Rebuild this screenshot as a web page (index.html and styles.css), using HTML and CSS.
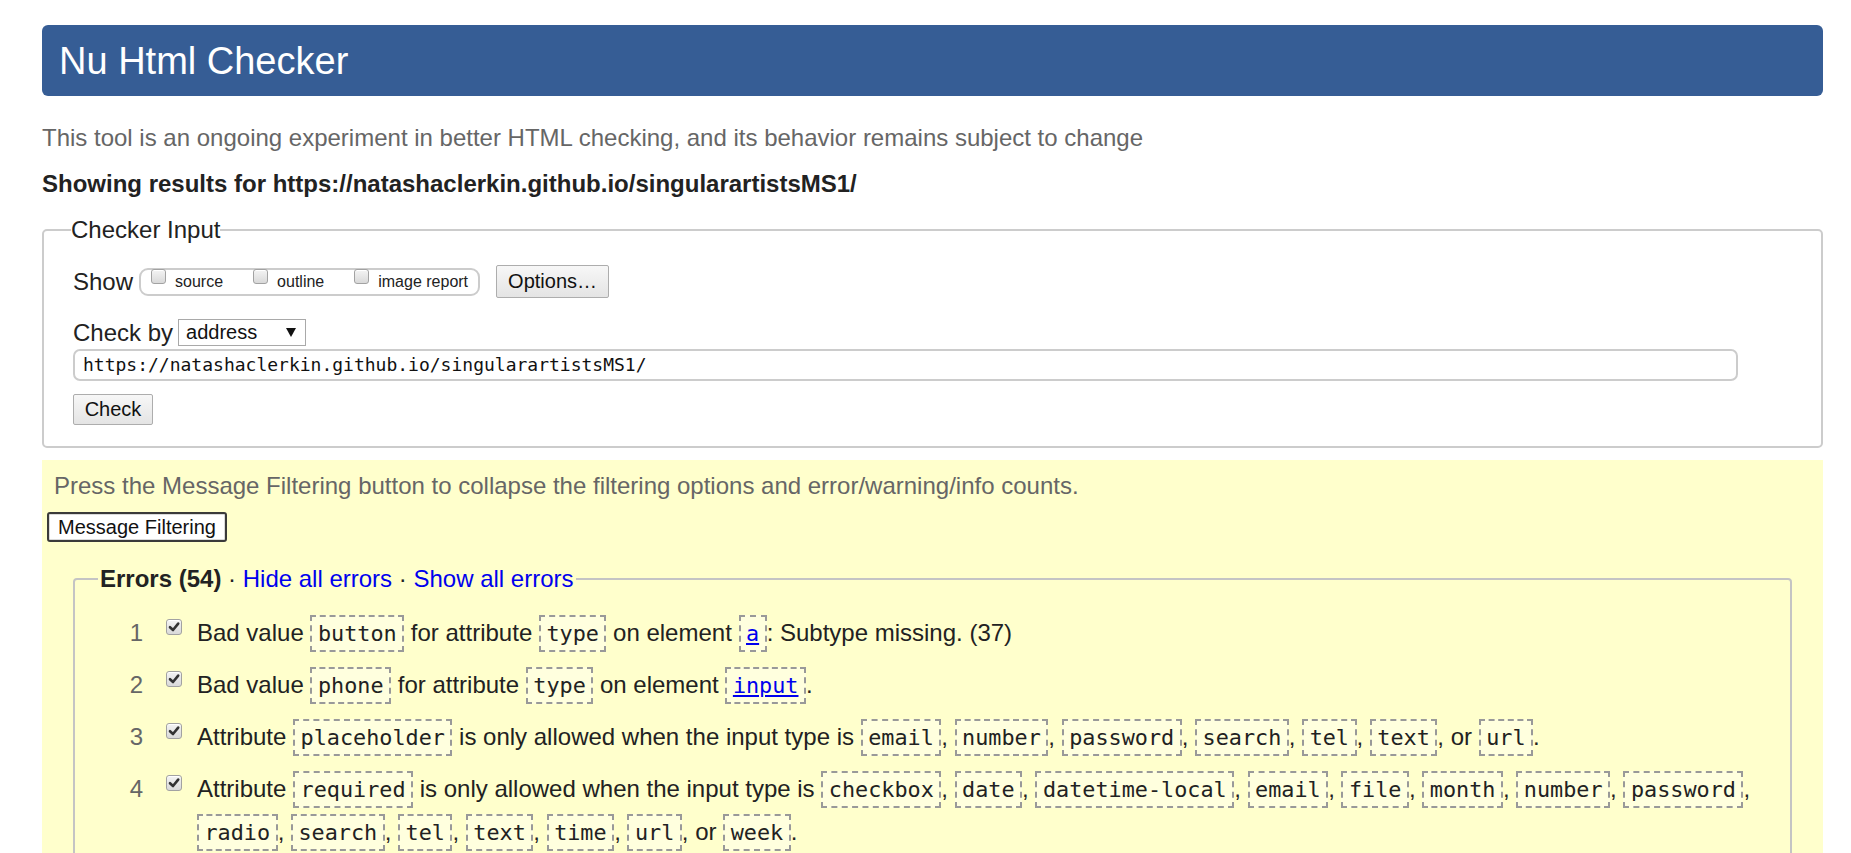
FILE: index.html
```html
<!DOCTYPE html>
<html lang="en">
<head>
<meta charset="utf-8">
<title>Nu Html Checker</title>
<link rel="stylesheet" href="styles.css">
</head>
<body>
<div class="page">
  <header class="banner"><h1>Nu Html Checker</h1></header>
  <p class="tagline">This tool is an ongoing experiment in better HTML checking, and its behavior remains subject to change</p>
  <p class="showing">Showing results for https://natashaclerkin.github.io/singularartistsMS1/</p>

  <fieldset class="checker">
    <legend>Checker Input</legend>
    <div class="show-row">
      <span class="lbl">Show</span>
      <span class="pill">
        <span class="opt"><span class="cb"></span><span class="optlbl">source</span></span>
        <span class="opt"><span class="cb"></span><span class="optlbl">outline</span></span>
        <span class="opt"><span class="cb"></span><span class="optlbl">image report</span></span>
      </span>
      <button class="btn options">Options…</button>
    </div>
    <div class="by-row">
      <span class="lbl">Check by</span>
      <span class="select">address<svg class="arrow" viewBox="0 0 10 9" width="10" height="9"><polygon points="0,0 10,0 5,9" fill="#111"/></svg></span>
    </div>
    <div class="url">https://natashaclerkin.github.io/singularartistsMS1/</div>
    <button class="btn check">Check</button>
  </fieldset>

  <section class="results">
    <p class="press">Press the Message Filtering button to collapse the filtering options and error/warning/info counts.</p>
    <button class="mf">Message Filtering</button>
    <fieldset class="errors">
      <legend><strong>Errors (54)</strong> · <a class="lnk">Hide all errors</a> · <a class="lnk">Show all errors</a></legend>
      <ol class="msgs">
        <li>
          <span class="num">1</span>
          <span class="cbcell"><span class="cb on"><svg viewBox="0 0 16 16" width="16" height="16"><path d="M4 8.2 L7 11 L12.2 4.6" fill="none" stroke="#333" stroke-width="2.6" stroke-linecap="round" stroke-linejoin="round"/></svg></span></span>
          <p>Bad value <code>button</code> for attribute <code>type</code> on element <code><a class="cl">a</a></code>: Subtype missing. (37)</p>
        </li>
        <li>
          <span class="num">2</span>
          <span class="cbcell"><span class="cb on"><svg viewBox="0 0 16 16" width="16" height="16"><path d="M4 8.2 L7 11 L12.2 4.6" fill="none" stroke="#333" stroke-width="2.6" stroke-linecap="round" stroke-linejoin="round"/></svg></span></span>
          <p>Bad value <code>phone</code> for attribute <code>type</code> on element <code><a class="cl">input</a></code>.</p>
        </li>
        <li>
          <span class="num">3</span>
          <span class="cbcell"><span class="cb on"><svg viewBox="0 0 16 16" width="16" height="16"><path d="M4 8.2 L7 11 L12.2 4.6" fill="none" stroke="#333" stroke-width="2.6" stroke-linecap="round" stroke-linejoin="round"/></svg></span></span>
          <p>Attribute <code>placeholder</code> is only allowed when the input type is <code>email</code>, <code>number</code>, <code>password</code>, <code>search</code>, <code>tel</code>, <code>text</code>, or <code>url</code>.</p>
        </li>
        <li>
          <span class="num">4</span>
          <span class="cbcell"><span class="cb on"><svg viewBox="0 0 16 16" width="16" height="16"><path d="M4 8.2 L7 11 L12.2 4.6" fill="none" stroke="#333" stroke-width="2.6" stroke-linecap="round" stroke-linejoin="round"/></svg></span></span>
          <p>Attribute <code>required</code> is only allowed when the input type is <code>checkbox</code>, <code>date</code>, <code>datetime-local</code>, <code>email</code>, <code>file</code>, <code>month</code>, <code>number</code>, <code>password</code>, <code>radio</code>, <code>search</code>, <code>tel</code>, <code>text</code>, <code>time</code>, <code>url</code>, or <code>week</code>.</p>
        </li>
      </ol>
    </fieldset>
  </section>
</div>
</body>
</html>
```
FILE: styles.css
```css
html, body {
  margin: 0;
  background: #fff;
}
body {
  font-family: "Liberation Sans", Arial, sans-serif;
  color: #222;
  overflow: hidden;
}
.page {
  padding: 25px 28px 0 42px;
}
.banner {
  background: #365d95;
  border-radius: 6px;
  height: 71px;
  display: flex;
  align-items: center;
  padding-left: 17px;
}
.banner h1 {
  margin: 0;
  font-size: 38px;
  font-weight: normal;
  line-height: 1;
  color: #fff;
}
.tagline {
  margin: 28px 0 0;
  font-size: 24px;
  line-height: 28px;
  color: #666;
}
.showing {
  margin: 18px 0 0;
  font-size: 24px;
  line-height: 28px;
  font-weight: bold;
  color: #222;
}
.checker {
  margin: 18px 0 0;
  border: 2px solid #ccc;
  border-radius: 5px;
  padding: 21px 28px 21px 29px;
  min-width: 0;
}
.checker legend {
  padding: 0;
  margin-left: -2px;
  font-size: 24px;
  line-height: 28px;
  color: #222;
}
.lbl {
  font-size: 24px;
  line-height: 28px;
}
.show-row {
  display: flex;
  align-items: center;
  height: 33px;
}
.pill {
  margin-left: 6px;
  box-sizing: border-box;
  height: 28px;
  border: 2px solid #ccc;
  border-radius: 9px;
  display: flex;
  align-items: flex-start;
  padding: 0 10px 0 10px;
  gap: 30px;
}
.opt {
  display: flex;
  align-items: flex-start;
}
.cb {
  display: inline-block;
  box-sizing: border-box;
  width: 15px;
  height: 15px;
  border: 1px solid #a2a2a2;
  border-radius: 3px;
  background: linear-gradient(#f4f4f4, #d9d9d9);
  box-shadow: inset 0 1px 0 #fff;
  margin-top: -1px;
}
.optlbl {
  margin-left: 9px;
  font-size: 16px;
  line-height: 24px;
  color: #222;
}
.btn {
  font-family: "Liberation Sans", Arial, sans-serif;
  font-size: 20px;
  color: #111;
  border: 1px solid #adadad;
  border-radius: 2px;
  background: linear-gradient(#f7f7f7, #e4e4e4);
  padding: 0;
  box-sizing: border-box;
}
.options {
  margin-left: 16px;
  width: 113px;
  height: 33px;
}
.by-row {
  display: flex;
  align-items: center;
  margin-top: 21px;
  height: 27px;
}
.select {
  margin-left: 5px;
  box-sizing: border-box;
  width: 128px;
  height: 27px;
  border: 1px solid #a9a9a9;
  display: flex;
  align-items: center;
  padding-left: 7px;
  font-size: 20px;
  color: #111;
  background: #fff;
}
.arrow {
  margin-left: auto;
  margin-right: 9px;
}
.url {
  margin-top: 3px;
  box-sizing: border-box;
  width: 1665px;
  height: 32px;
  border: 2px solid #ccc;
  border-radius: 7px;
  padding-left: 8px;
  font-family: "DejaVu Sans Mono", monospace;
  font-size: 18px;
  line-height: 28px;
  color: #111;
}
.check {
  display: block;
  margin-top: 13px;
  width: 80px;
  height: 31px;
}
.results {
  margin-top: 12px;
  background: #ffffcc;
  padding: 12px 0 60px 0;
}
.press {
  margin: 0;
  padding-left: 12px;
  font-size: 24px;
  line-height: 28px;
  color: #666;
}
.mf {
  display: block;
  margin: 12px 0 0 5px;
  width: 180px;
  height: 30px;
  box-sizing: border-box;
  border: 2px solid #3a3a3a;
  border-radius: 3px;
  background: #fff;
  box-shadow: inset 0 0 0 1px #dadada;
  font-family: "Liberation Sans", Arial, sans-serif;
  font-size: 20px;
  color: #111;
  padding: 0;
}
.errors {
  margin: 23px 31px 0 31px;
  border: 2px solid #c4c4c4;
  border-radius: 4px;
  padding: 18px 0 0 0;
  min-width: 0;
}
.errors legend {
  margin-left: 23px;
  padding: 0 2px;
  font-size: 24px;
  line-height: 28px;
  color: #222;
}
.lnk {
  color: #0000ee;
  text-decoration: none;
}
.msgs {
  list-style: none;
  margin: 0;
  padding: 0;
}
.msgs li {
  display: grid;
  grid-template-columns: 68px 54px 1fr;
  margin-bottom: 9px;
  font-size: 24px;
  line-height: 43px;
}
.num {
  text-align: right;
  color: #666;
}
.cbcell {
  padding-left: 23px;
}
.cb.on {
  width: 16px;
  height: 16px;
  margin-top: 8px;
  display: block;
  position: relative;
}
.cb.on svg {
  position: absolute;
  left: -1px;
  top: -1px;
}
.msgs p {
  margin: 0;
  padding-right: 20px;
  color: #222;
}
code {
  font-family: "DejaVu Sans Mono", monospace;
  font-size: 21.8px;
  line-height: 1;
  border: 2px dashed #999;
  padding: 4px 5.5px;
  background: rgba(255, 255, 255, 0.35);
  white-space: nowrap;
  color: #222;
}
.cl {
  color: #0000ee;
  text-decoration: underline;
}
```
